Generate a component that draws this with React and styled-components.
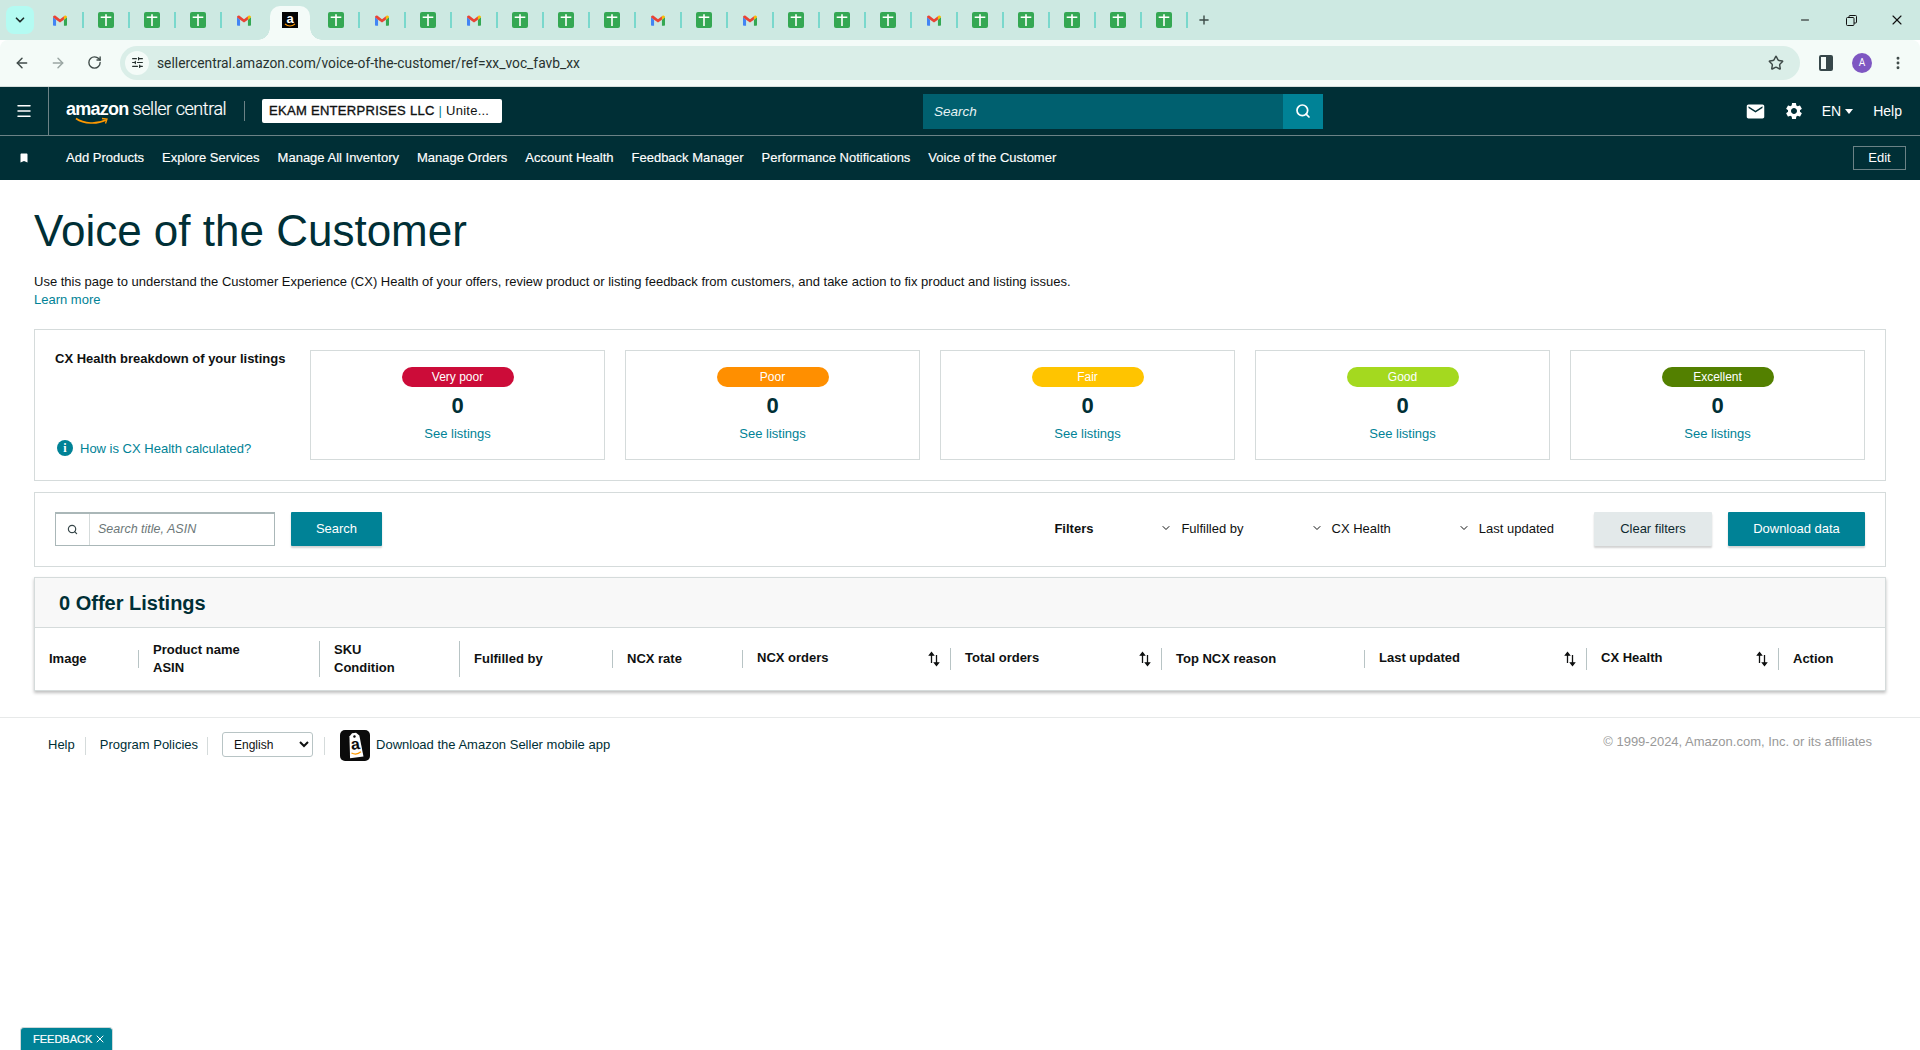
import React from 'react';
import styled, { createGlobalStyle } from 'styled-components';
import { ArrowLeft, ArrowRight, RotateCw, Star, EllipsisVertical, X, Minus, Plus, Search as SearchIcon, ChevronDown, Menu, SlidersHorizontal } from 'lucide-react';
import { MdEmail, MdSettings, MdBookmark } from 'react-icons/md';

const Global = createGlobalStyle`
  html, body { margin: 0; padding: 0; background: #fff; }
  body { font-family: "Liberation Sans", Arial, sans-serif; color: #002f36; font-size: 13px; }
  * { box-sizing: border-box; }
`;

const Page = styled.div`min-height: 1050px; background: #fff; overflow: hidden;`;

const TabStrip = styled.div`height: 40px; background: #cde9e2; display: flex; align-items: flex-start;`;
const TabSearch = styled.div`
  width: 28px; height: 28px; margin: 6px 3px 0 6px; border-radius: 8px; background: #b4fbf2;
  display: flex; align-items: center; justify-content: center; color: #1f2d2b;
`;
const Tab = styled.div`
  position: relative; width: 46px; height: ${p => (p.$active ? '34px' : '40px')};
  margin-top: ${p => (p.$active ? '6px' : '0')};
  display: flex; align-items: center; justify-content: center;
  padding-bottom: ${p => (p.$active ? '6px' : '0')};
  background: ${p => (p.$active ? '#f4fbf8' : 'transparent')};
  border-radius: ${p => (p.$active ? '10px 10px 0 0' : '0')};
  ${p => p.$active && `
    width: 40px; margin-left: 3px; margin-right: 3px;
    &::before, &::after { content: ''; position: absolute; bottom: 0; width: 12px; height: 12px;
      background: radial-gradient(circle at 0 0, transparent 11.5px, #f4fbf8 12px); }
    &::before { left: -12px; }
    &::after { right: -12px; transform: scaleX(-1); }
  `}
  ${p => p.$sep && `
    &::after { content: ''; position: absolute; right: -1px; top: 12px; width: 2px; height: 16px; background: #79d8cc; }
  `}
`;
const PlusBox = styled.div`width: 34px; height: 40px; display: flex; align-items: center; justify-content: center; color: #3b4a47;`;
const WinControls = styled.div`margin-left: auto; display: flex; color: #111;`;
const WinBtn = styled.div`width: 46px; height: 40px; display: flex; align-items: center; justify-content: center;`;

const Toolbar = styled.div`
  height: 47px; background: #f4fbf8; display: flex; align-items: center; padding-bottom: 1px;
  border-bottom: 1px solid #d5dedb; border-radius: 8px 8px 0 0; color: #3f4b49;
`;
const NavBtn = styled.div`
  width: 36px; display: flex; justify-content: center; color: ${p => (p.$off ? '#9aa6a3' : '#3f4b49')};
  &:first-child { margin-left: 4px; }
`;
const Omnibox = styled.div`
  width: 1680px; height: 34px; margin-left: 8px; border-radius: 17px; background: #daeee8;
  display: flex; align-items: center; padding: 0 16px 0 5px;
`;
const SiteChip = styled.div`
  width: 24px; height: 24px; border-radius: 50%; background: #f4fbf8; display: flex; align-items: center; justify-content: center;
  color: #26302e; margin-right: 8px;
`;
const Url = styled.div`font: 13.8px/16px Roboto, "Liberation Sans", sans-serif; color: #28322f; flex: 1;`;
const ToolIcons = styled.div`display: flex; align-items: center; margin-left: 8px;`;
const ToolIcon = styled.div`width: 36px; display: flex; justify-content: center;`;
const SidePanel = styled.div`width: 14px; height: 16px; border: 2px solid #37474a; border-radius: 2px; background: linear-gradient(90deg, #f4fbf8 50%, #37474a 50%);`;
const Avatar = styled.div`width: 20px; height: 20px; border-radius: 50%; background: #7e57c2; color: #fff; font: 10px/20px Roboto, sans-serif; text-align: center;`;

const TopNav = styled.div`
  height: 49px; background: #002f36; border-bottom: 1px solid #6b8286; color: #fff;
  display: grid; grid-template-columns: 923px 400px 1fr; align-items: center;
`;
const Brand = styled.div`display: flex; align-items: center; height: 48px;`;
const MenuCell = styled.div`width: 49px; height: 48px; border-right: 1px solid #6b8286; display: flex; align-items: center; justify-content: center; padding-right: 1px;`;
const Logo = styled.div`position: relative; margin-left: 17px; width: 160px; height: 32px; display: flex; align-items: baseline; line-height: 28px; white-space: nowrap;`;
const LogoBold = styled.span`font: bold 18px/28px "Liberation Sans", sans-serif; letter-spacing: -0.75px;`;
const LogoLight = styled.span`font: 300 18px/28px Roboto, sans-serif; letter-spacing: -0.45px; margin-left: 4px; -webkit-text-stroke: 0.2px #fff;`;
const LogoSmile = styled.svg`position: absolute; left: 9px; top: 22px;`;
const BrandSep = styled.div`width: 1px; height: 20px; background: #6b8286; margin-left: 18px;`;
const Account = styled.div`
  width: 240px; height: 24px; margin-left: 17px; background: #fff; border-radius: 2px; color: #0f1111;
  font: 13px/24px "Liberation Sans", sans-serif; padding-left: 7px; white-space: nowrap; letter-spacing: 0.25px;
`;
const AccountName = styled.span`letter-spacing: 0.3px; -webkit-text-stroke: 0.35px #0f1111;`;
const AccountPipe = styled.span`color: #008296;`;
const TopSearch = styled.div`height: 35px; display: flex; background: #00606f;`;
const TopSearchText = styled.div`flex: 1; font: italic 13.5px/35px "Liberation Sans", sans-serif; padding-left: 11px; color: #e6f3f4;`;
const TopSearchBtn = styled.div`width: 40px; background: #008296; display: flex; align-items: center; justify-content: center; padding-right: 1px;`;
const TopRight = styled.div`display: flex; align-items: center; justify-content: flex-end; padding-right: 18px; font-size: 14px;`;
const TopIcon = styled.div`display: flex; margin-right: 18px;`;
const Lang = styled.div`display: flex; align-items: center; margin-right: 20px;`;
const Caret = styled.span`width: 0; height: 0; margin-left: 4px; border: 4.5px solid transparent; border-top: 5px solid #fff; border-bottom: 0;`;

const SubNav = styled.div`height: 44px; background: #002f36; color: #fff; display: flex; align-items: center; padding: 0 14px 0 18px;`;
const BookmarkBox = styled.div`width: 12px; margin-right: 36px; display: flex; justify-content: center;`;
const SubLinks = styled.div`display: flex; gap: 18px;`;
const SubLink = styled.a`font-size: 13px; line-height: 16px; color: #fff; -webkit-text-stroke: 0.15px #fff;`;
const EditBtn = styled.div`margin-left: auto; width: 53px; height: 24px; border: 1px solid #6b8286; font-size: 13px; line-height: 22px; text-align: center;`;

const Main = styled.main`padding: 0 34px;`;
const Title = styled.h1`margin: 25px 0 16px; font: 400 44px/52px "Liberation Sans", sans-serif; color: #002f36;`;
const Intro = styled.p`margin: 0; font-size: 13px; line-height: 18px; color: #0f1111;`;
const LinkText = styled.a`color: #008296; font-size: 13px;`;

const Panel = styled.section`border: 1px solid #d5dbdb; background: #fff;`;
const HealthPanel = styled(Panel)`margin-top: 20px; padding: 20px; display: flex;`;
const HealthIntro = styled.div`width: 255px; height: 110px; display: flex; flex-direction: column; justify-content: space-between; padding: 1px 0 1px;`;
const HealthTitle = styled.div`font-weight: bold; font-size: 13px; line-height: 16px; color: #0f1111;`;
const HowLink = styled.div`display: flex; align-items: center; gap: 7px; padding: 0 0 3px 2px;`;
const InfoDot = styled.span`width: 16px; height: 16px; border-radius: 50%; background: #008296; color: #fff; font: bold 12px/16px "Liberation Serif", serif; text-align: center;`;
const Cards = styled.div`display: flex; gap: 20px;`;
const Card = styled.div`width: 295px; height: 110px; border: 1px solid #d5dbdb; display: flex; flex-direction: column; align-items: center; padding-top: 16px;`;
const Pill = styled.div`width: 112px; height: 20px; border-radius: 10px; background: ${p => p.$bg}; color: #fff; font-size: 12px; line-height: 20px; text-align: center;`;
const Count = styled.div`margin-top: 5px; font: bold 22px/28px "Liberation Sans", sans-serif; color: #002f36;`;
const CardLink = styled(LinkText)`margin-top: 5px; line-height: 18px; font-size: 13px;`;

const FilterPanel = styled(Panel)`margin-top: 11px; padding: 19px 20px 20px; display: flex; align-items: center;`;
const SearchGroup = styled.div`width: 220px; height: 34px; border: 1px solid #aab7b8; border-top-width: 2px; display: flex; margin-right: 16px;`;
const SearchCell = styled.div`width: 34px; border-right: 1px solid #d5dbdb; display: flex; align-items: center; justify-content: center; color: #37474a;`;
const SearchPlaceholder = styled.div`padding-left: 8px; font: italic 12.5px/31px "Liberation Sans", sans-serif; color: #6c7778;`;
const PrimaryBtn = styled.div`
  width: ${p => p.$w}; height: 34px; background: #008296; color: #fff; font-size: 13px; line-height: 33px; text-align: center;
  border-radius: 1px; box-shadow: 0 2px 2px rgba(0,0,0,.18);
`;
const GrayBtn = styled(PrimaryBtn)`background: #e3e9ea; color: #0f2a2f; margin-right: 16px;`;
const FilterGroup = styled.div`margin-left: auto; display: flex; gap: 67px; align-items: center; margin-right: 40px; padding-bottom: 2px; color: #0f1111;`;
const FiltersLabel = styled.div`font-weight: bold; font-size: 13px;`;
const FilterItem = styled.div`display: flex; align-items: center; gap: 9px; font-size: 13px;`;

const TablePanel = styled(Panel)`margin-top: 10px; box-shadow: 0 2px 3px rgba(0,0,0,.25);`;
const TableHead = styled.div`height: 50px; background: #f8f8f8; border-bottom: 1px solid #d5dbdb; padding-left: 24px; font: bold 20px/51px "Liberation Sans", sans-serif; color: #002f36;`;
const HeadRow = styled.div`
  height: 62px; display: grid; align-items: center;
  grid-template-columns: 103px 181px 140px 153px 130px 208px 211px 203px 222px 192px 1fr;
`;
const HeadCell = styled.div`display: flex; align-items: center; font-weight: bold; font-size: 13px; color: #0f1111; padding-right: 10px; &:first-child { padding-left: 14px; }`;
const Divider = styled.span`width: 1px; height: ${p => p.$h}px; background: #b8c4c5; margin-right: 14px; flex: none;`;
const HeadLabel = styled.div`line-height: 18px; white-space: nowrap; padding-bottom: ${p => (p.$raised ? '3px' : '0')};`;
const Sort = styled.svg`margin-left: auto; flex: none;`;

const Footer = styled.footer`
  margin-top: 26px; border-top: 1px solid #e7e9e9; padding: 12px 48px 0; display: flex; align-items: center; font-size: 13px; color: #002f36;
`;
const FootText = styled.span`padding-bottom: 2px;`;
const FootSep = styled.span`width: 1px; height: 18px; background: #d5dbdb; margin: 0 ${p => p.$r}px 0 ${p => p.$l}px;`;
const LangSelect = styled.select`
  width: 91px; height: 25px; margin-bottom: 2px; border: 1px solid #b8c4c5; border-radius: 3px; background: #fff; font: 12px "Liberation Sans", sans-serif; color: #0f1111; padding-left: 7px;
`;
const AppIcon = styled.svg`margin-right: 6px; flex: none;`;
const Copyright = styled.div`margin-left: auto; color: #999; font-size: 13px; padding-bottom: 9px;`;

const Feedback = styled.div`
  position: fixed; left: 20px; bottom: 0; width: 93px; height: 23px; background: #008296; color: #fff; border-radius: 4px 4px 0 0;
  border: 1px solid #cfd8d9; border-bottom: 0; font-size: 11px; line-height: 22px; padding-left: 12px; display: flex; align-items: center; gap: 2px;
  -webkit-text-stroke: 0.2px #fff;
`;

const Gmail = () => (
  <svg width="14" height="11" viewBox="0 0 16 12">
    <path d="M0 2v8.8C0 11.5.5 12 1.2 12h2.3V5z" fill="#4285f4" />
    <path d="M12.5 5v7h2.3c.7 0 1.2-.5 1.2-1.2V2z" fill="#34a853" />
    <path d="M0 2.2C0 .6 1.7-.4 2.9.6L8 4.5l4.5-3.4V5L8 8.4 3.5 5 0 2.4z" fill="#ea4335" />
    <path d="M12.5 1.1l.6-.5C14.3-.4 16 .6 16 2.2L12.5 5z" fill="#fbbc04" />
  </svg>
);
const Sheet = () => (
  <svg width="16" height="16" viewBox="0 0 16 16">
    <rect width="16" height="16" rx="2" fill="#34a853" />
    <path d="M7.2 2.2h1.6v2.4h4.5v1.5H8.8V14H7.2V6.1H2.7V4.6h4.5z" fill="#fff" />
  </svg>
);
const AmazonFav = styled.div`
  position: relative; width: 16px; height: 16px; background: #050505; color: #fff; font: bold 13px/13px "Liberation Sans", sans-serif; text-align: center;
`;
const FavSmile = styled.svg`position: absolute; left: 2px; bottom: 1px;`;

const tabs = 'MSSSMASMSMSSSMSMSSSMSSSSS'.split('');
const subLinks = ['Add Products', 'Explore Services', 'Manage All Inventory', 'Manage Orders', 'Account Health', 'Feedback Manager', 'Performance Notifications', 'Voice of the Customer'];
const grades = [
  { label: 'Very poor', bg: '#cc0c39' },
  { label: 'Poor', bg: '#ff8f00' },
  { label: 'Fair', bg: '#ffc400' },
  { label: 'Good', bg: '#a4d91f' },
  { label: 'Excellent', bg: '#538000' },
];
const columns = [
  { lines: ['Image'], h: 0 },
  { lines: ['Product name', 'ASIN'], h: 18 },
  { lines: ['SKU', 'Condition'], h: 36 },
  { lines: ['Fulfilled by'], h: 36 },
  { lines: ['NCX rate'], h: 18 },
  { lines: ['NCX orders'], h: 18, sort: true },
  { lines: ['Total orders'], h: 22, sort: true },
  { lines: ['Top NCX reason'], h: 22 },
  { lines: ['Last updated'], h: 18, sort: true },
  { lines: ['CX Health'], h: 22, sort: true },
  { lines: ['Action'], h: 22 },
];

const SortIcon = () => (
  <Sort width="12" height="16" viewBox="0 0 12 16" fill="none" stroke="#0f1111" strokeWidth="1.3">
    <path d="M3.5 12V2" />
    <path d="M1.5 4.2L3.5 1.5l2 2.7z" fill="#0f1111" />
    <path d="M8.5 4v10" />
    <path d="M6.5 11.8l2 2.7 2-2.7z" fill="#0f1111" />
  </Sort>
);

export default function App() {
  return (
    <Page>
      <Global />
      <TabStrip>
        <TabSearch><ChevronDown size={14} strokeWidth={3} /></TabSearch>
        {tabs.map((t, i) => {
          const active = t === 'A';
          const sep = !active && tabs[i + 1] !== 'A';
          return (
            <Tab key={i} $active={active} $sep={sep}>
              {t === 'M' && <Gmail />}
              {t === 'S' && <Sheet />}
              {t === 'A' && (
                <AmazonFav>a
                  <FavSmile width="12" height="4" viewBox="0 0 12 4"><path d="M1 1c3 2.4 7 2.4 10 0" fill="none" stroke="#ff9900" strokeWidth="1.2" /></FavSmile>
                </AmazonFav>
              )}
            </Tab>
          );
        })}
        <PlusBox><Plus size={14} strokeWidth={2.4} /></PlusBox>
        <WinControls>
          <WinBtn><Minus size={12} strokeWidth={2} /></WinBtn>
          <WinBtn>
            <svg width="11" height="11" viewBox="0 0 11 11" fill="none" stroke="#111" strokeWidth="1"><rect x="0.5" y="2.5" width="7.5" height="8" rx="1" /><path d="M3 2.5V1.5a1 1 0 0 1 1-1h5.5a1 1 0 0 1 1 1V7a1 1 0 0 1-1 1H8" /></svg>
          </WinBtn>
          <WinBtn><X size={16} strokeWidth={1.7} /></WinBtn>
        </WinControls>
      </TabStrip>

      <Toolbar>
        <NavBtn><ArrowLeft size={16} strokeWidth={2.2} /></NavBtn>
        <NavBtn $off><ArrowRight size={16} strokeWidth={2.2} /></NavBtn>
        <NavBtn><RotateCw size={15} strokeWidth={2.2} /></NavBtn>
        <Omnibox>
          <SiteChip><SlidersHorizontal size={13} strokeWidth={2.2} /></SiteChip>
          <Url>sellercentral.amazon.com/voice-of-the-customer/ref=xx_voc_favb_xx</Url>
          <Star size={16} strokeWidth={2.2} color="#3f4b49" />
        </Omnibox>
        <ToolIcons>
          <ToolIcon><SidePanel /></ToolIcon>
          <ToolIcon><Avatar>A</Avatar></ToolIcon>
          <ToolIcon><EllipsisVertical size={16} strokeWidth={2.4} /></ToolIcon>
        </ToolIcons>
      </Toolbar>

      <TopNav>
        <Brand>
          <MenuCell><Menu size={18} strokeWidth={2} /></MenuCell>
          <Logo>
            <LogoBold>amazon</LogoBold><LogoLight>seller central</LogoLight>
            <LogoSmile width="34" height="8" viewBox="0 0 34 8" fill="none">
              <path d="M1 1.5C9 7 22 7.5 31 3" stroke="#f90" strokeWidth="1.6" />
              <path d="M27 1.5l5 .5-1.5 4.5" stroke="#f90" strokeWidth="1.3" />
            </LogoSmile>
          </Logo>
          <BrandSep />
          <Account><AccountName>EKAM ENTERPRISES LLC</AccountName> <AccountPipe>|</AccountPipe> Unite...</Account>
        </Brand>
        <TopSearch>
          <TopSearchText>Search</TopSearchText>
          <TopSearchBtn><SearchIcon size={16} strokeWidth={2.6} /></TopSearchBtn>
        </TopSearch>
        <TopRight>
          <TopIcon><MdEmail size={21} /></TopIcon>
          <TopIcon><MdSettings size={20} /></TopIcon>
          <Lang>EN<Caret /></Lang>
          <span>Help</span>
        </TopRight>
      </TopNav>

      <SubNav>
        <BookmarkBox><MdBookmark size={14} /></BookmarkBox>
        <SubLinks>{subLinks.map(l => <SubLink key={l}>{l}</SubLink>)}</SubLinks>
        <EditBtn>Edit</EditBtn>
      </SubNav>

      <Main>
        <Title>Voice of the Customer</Title>
        <Intro>
          Use this page to understand the Customer Experience (CX) Health of your offers, review product or listing feedback from customers, and take action to fix product and listing issues.<br />
          <LinkText>Learn more</LinkText>
        </Intro>

        <HealthPanel>
          <HealthIntro>
            <HealthTitle>CX Health breakdown of your listings</HealthTitle>
            <HowLink><InfoDot>i</InfoDot><LinkText>How is CX Health calculated?</LinkText></HowLink>
          </HealthIntro>
          <Cards>
            {grades.map(g => (
              <Card key={g.label}>
                <Pill $bg={g.bg}>{g.label}</Pill>
                <Count>0</Count>
                <CardLink>See listings</CardLink>
              </Card>
            ))}
          </Cards>
        </HealthPanel>

        <FilterPanel>
          <SearchGroup>
            <SearchCell><SearchIcon size={11} strokeWidth={2.6} /></SearchCell>
            <SearchPlaceholder>Search title, ASIN</SearchPlaceholder>
          </SearchGroup>
          <PrimaryBtn $w="91px">Search</PrimaryBtn>
          <FilterGroup>
            <FiltersLabel>Filters</FiltersLabel>
            <FilterItem><ChevronDown size={12} strokeWidth={2} />Fulfilled by</FilterItem>
            <FilterItem><ChevronDown size={12} strokeWidth={2} />CX Health</FilterItem>
            <FilterItem><ChevronDown size={12} strokeWidth={2} />Last updated</FilterItem>
          </FilterGroup>
          <GrayBtn $w="118px">Clear filters</GrayBtn>
          <PrimaryBtn $w="137px">Download data</PrimaryBtn>
        </FilterPanel>

        <TablePanel>
          <TableHead>0 Offer Listings</TableHead>
          <HeadRow>
            {columns.map(c => (
              <HeadCell key={c.lines[0]}>
                {c.h > 0 && <Divider $h={c.h} />}
                <HeadLabel $raised={c.sort}>{c.lines.map(l => <div key={l}>{l}</div>)}</HeadLabel>
                {c.sort && <SortIcon />}
              </HeadCell>
            ))}
          </HeadRow>
        </TablePanel>
      </Main>

      <Footer>
        <FootText>Help</FootText>
        <FootSep $l={10} $r={14} />
        <FootText>Program Policies</FootText>
        <FootSep $l={9} $r={14} />
        <LangSelect defaultValue="English"><option>English</option></LangSelect>
        <FootSep $l={11} $r={15} />
        <AppIcon width="30" height="31" viewBox="0 0 30 31">
          <rect width="30" height="31" rx="5" fill="#0b0b0b" />
          <g transform="rotate(-7 15 15)">
            <path d="M10.5 6l3-3h4l3 3 1.5 21.5H8.5z" fill="#fff" />
            <circle cx="15.5" cy="6.5" r="1.3" fill="#0b0b0b" />
            <text x="15.5" y="19.5" fontSize="16" fontWeight="bold" textAnchor="middle" fontFamily="Liberation Sans, sans-serif" fill="#0b0b0b">a</text>
            <path d="M10.5 22.5c3 2 6.5 2 9.5 0" fill="none" stroke="#f90" strokeWidth="1.3" />
          </g>
        </AppIcon>
        <FootText>Download the Amazon Seller mobile app</FootText>
        <Copyright>© 1999-2024, Amazon.com, Inc. or its affiliates</Copyright>
      </Footer>

      <Feedback>FEEDBACK <X size={12} strokeWidth={2} /></Feedback>
    </Page>
  );
}
